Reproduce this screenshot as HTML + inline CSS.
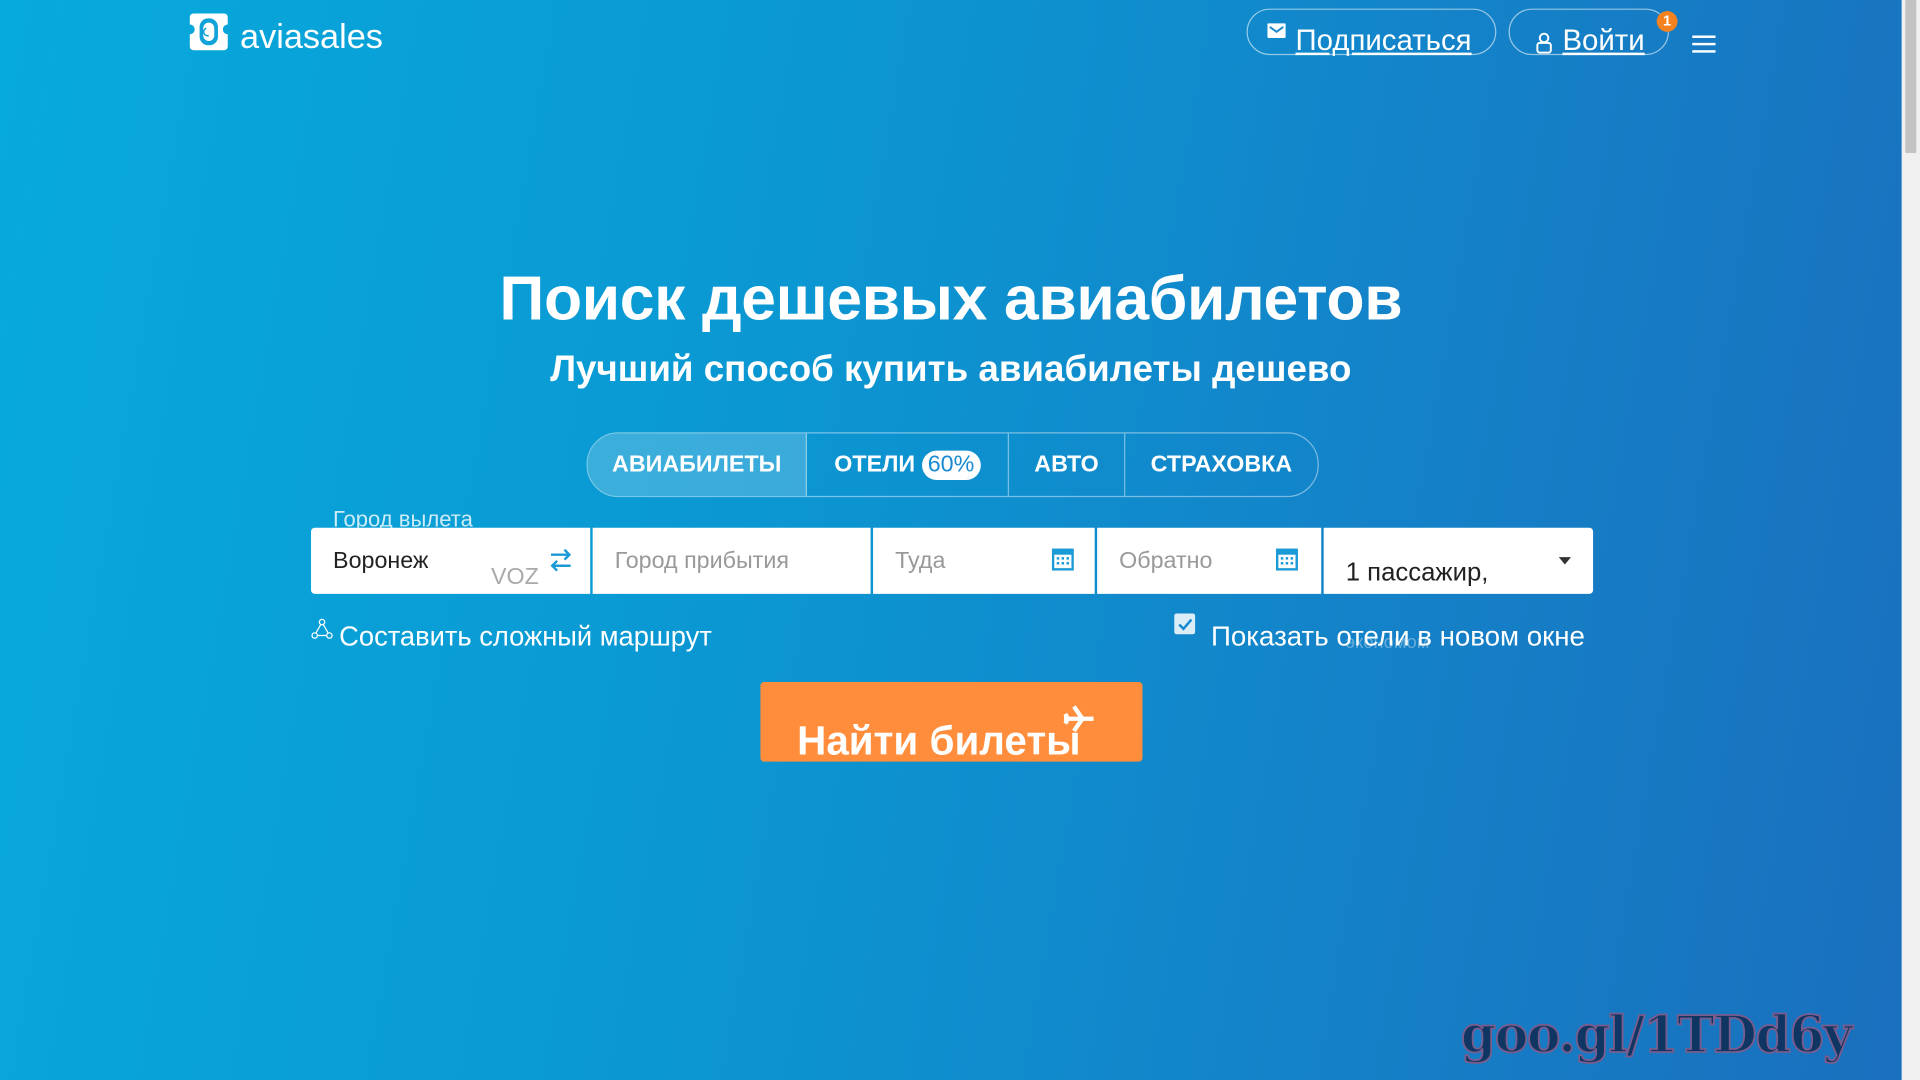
<!DOCTYPE html>
<html><head><meta charset="utf-8"><style>
html,body{margin:0;padding:0;width:1920px;height:1080px;overflow:hidden;}
#w{position:absolute;left:0;top:0;width:1568px;height:882px;transform:scale(1.22449);transform-origin:0 0;
background:linear-gradient(100deg,#07aadc 0%,#0b97d2 40%,#1482c8 70%,#1a6fbd 100%);font-family:"Liberation Sans","DejaVu Sans",sans-serif;color:#fff;overflow:hidden}
.a{position:absolute}
.sb{right:0;top:0;width:15px;height:882px;background:#f0f0f0}
.th{right:3px;top:0;width:9px;height:125px;background:#c2c2c2;border-radius:1px}
.pill{border:1px solid rgba(255,255,255,.55);border-radius:20px;height:36px}
.inp{background:#fff;height:54px;top:431px;color:#999;font-size:19px}
.inp span{position:absolute;top:17px}
.tabs{left:479px;top:353px;width:596px;height:51px;border:1px solid rgba(255,255,255,.45);border-radius:26px;display:flex;font-weight:bold;font-size:19px;overflow:hidden}
.tabs div{display:flex;align-items:center;justify-content:center;border-right:1px solid rgba(255,255,255,.45)}
</style></head><body><div id="w">
<svg class="a" style="left:154px;top:10px" width="33" height="32"><path d="M4 1h25a3 3 0 0 1 3 3v6a4 4 0 0 0 0 8v10a3 3 0 0 1-3 3H4a3 3 0 0 1-3-3V18a4 4 0 0 0 0-8V4a3 3 0 0 1 3-3z" fill="#fff"/><rect x="9" y="5" width="15" height="22" rx="7" fill="#10a2d8"/><rect x="12" y="8.5" width="9" height="15" rx="4.5" fill="#fff"/><path d="M14.5 13a3 3 0 0 0 2 6" stroke="#10a2d8" stroke-width="1.2" fill="none"/></svg>
<div class="a" style="left:196px;top:14px;font-size:28px">aviasales</div>

<div class="a pill" style="left:1018px;top:7px;width:202px"></div>
<svg class="a" style="left:1035px;top:19px" width="15" height="12"><rect width="15" height="12" rx="1" fill="#fff"/><path d="M2 3l5.5 4 5.5-4" stroke="#1a8ad0" stroke-width="1.6" fill="none"/></svg>
<div class="a" style="left:1058px;top:20px;font-size:24px;text-decoration:underline">Подписаться</div>
<div class="a pill" style="left:1232px;top:7px;width:129px"></div>
<svg class="a" style="left:1254px;top:26px" width="14" height="18"><circle cx="7" cy="5" r="3.5" stroke="#fff" stroke-width="1.6" fill="none"/><rect x="1.5" y="9" width="11" height="8" rx="2" stroke="#fff" stroke-width="1.6" fill="none"/></svg>
<div class="a" style="left:1276px;top:20px;font-size:24px;text-decoration:underline">Войти</div>
<div class="a" style="left:1353px;top:9px;width:17px;height:17px;border-radius:50%;background:#f6821f;font-size:12px;font-weight:bold;text-align:center;line-height:17px">1</div>
<div class="a" style="left:1382px;top:29px;width:19px;height:2px;background:#fff;box-shadow:0 6px 0 #fff,0 12px 0 #fff"></div>

<div class="a" style="left:0;width:1553px;top:214px;text-align:center;font-size:51px;font-weight:bold;letter-spacing:-0.3px">Поиск дешевых авиабилетов</div>
<div class="a" style="left:0;width:1553px;top:285px;text-align:center;font-size:30px;font-weight:bold">Лучший способ купить авиабилеты дешево</div>

<div class="a tabs">
<div style="width:178px;background:rgba(255,255,255,.2)">АВИАБИЛЕТЫ</div>
<div style="width:164px">ОТЕЛИ&nbsp;<span style="background:#fff;color:#1a8ad0;border-radius:12px;padding:1px 5px;font-weight:normal">60%</span></div>
<div style="width:94px">АВТО</div>
<div style="flex:1;border-right:0">СТРАХОВКА</div>
</div>

<div class="a" style="left:272px;top:414px;font-size:18px;color:rgba(255,255,255,.8);height:17px;overflow:hidden">Город вылета</div>
<div class="a inp" style="left:254px;width:228px;border-radius:3px 0 0 3px"><span style="left:18px;color:#222">Воронеж</span><span style="left:147px;top:30px;color:#aaa">VOZ</span>
<svg class="a" style="left:195px;top:17px" width="18" height="20"><path d="M1 5h15M12 1l4 4-4 4M17 14H2M6 10l-4 4 4 4" stroke="#1a9ad6" stroke-width="2" fill="none"/></svg></div>
<div class="a inp" style="left:484px;width:227px"><span style="left:18px">Город прибытия</span></div>
<div class="a inp" style="left:713px;width:181px"><span style="left:18px">Туда</span>
<svg class="a" style="left:146px;top:15px" width="18" height="20"><rect x="1" y="3" width="16" height="16" fill="none" stroke="#1a9ad6" stroke-width="2"/><rect x="1" y="3" width="16" height="4" fill="#1a9ad6"/><path d="M4 10h2M8 10h2M12 10h2M4 14h2M8 14h2M12 14h2" stroke="#1a9ad6" stroke-width="2"/></svg></div>
<div class="a inp" style="left:896px;width:183px"><span style="left:18px">Обратно</span>
<svg class="a" style="left:146px;top:15px" width="18" height="20"><rect x="1" y="3" width="16" height="16" fill="none" stroke="#1a9ad6" stroke-width="2"/><rect x="1" y="3" width="16" height="4" fill="#1a9ad6"/><path d="M4 10h2M8 10h2M12 10h2M4 14h2M8 14h2M12 14h2" stroke="#1a9ad6" stroke-width="2"/></svg></div>
<div class="a inp" style="left:1081px;width:220px;border-radius:0 3px 3px 0"><span style="left:18px;top:25px;color:#222;font-size:21px">1 пассажир,</span>
<div class="a" style="left:192px;top:24px;border:5px solid transparent;border-top:6px solid #333"></div></div>

<svg class="a" style="left:254px;top:505px" width="18" height="18"><circle cx="9" cy="3" r="2.2" stroke="#fff" fill="none"/><circle cx="3" cy="14" r="2.2" stroke="#fff" fill="none"/><circle cx="15" cy="14" r="2.2" stroke="#fff" fill="none"/><path d="M8 5L4 12M10 5l4 7M5 14h8" stroke="#fff"/></svg>
<div class="a" style="left:277px;top:507px;font-size:22.3px">Составить сложный маршрут</div>
<div class="a" style="left:959px;top:501px;width:17px;height:17px;background:#fff;border-radius:2px;opacity:.85"></div>
<svg class="a" style="left:961px;top:503px" width="14" height="14"><path d="M2 7l3.5 3.5L12 3" stroke="#1a8ad0" stroke-width="2" fill="none"/></svg>
<div class="a" style="left:1099px;top:516px;font-size:15px;color:rgba(255,255,255,.35)">экономом</div>
<div class="a" style="left:989px;top:507px;font-size:22.6px">Показать отели в новом окне</div>

<div class="a" style="left:621px;top:557px;width:312px;height:65px;background:#ff8d3b;border-radius:3px;overflow:hidden">
<div class="a" style="left:30px;top:29px;font-size:33px;font-weight:bold;white-space:nowrap">Найти билеты</div>
<svg class="a" style="left:246px;top:19px" width="28" height="26"><path d="M2 11h24M10 1l7 10-7 10M3 7l2 4-2 4" stroke="#fff" stroke-width="3.5" fill="none"/></svg>
</div>

<div class="a" style="left:1193px;top:821px;font-family:'DejaVu Serif',serif;font-weight:bold;font-size:41px;color:#0f3563;-webkit-text-stroke:1.5px #7a5c8c;letter-spacing:-1px">goo.gl/1TDd6y</div>
<div class="a sb"></div><div class="a th"></div>
</div></body></html>
